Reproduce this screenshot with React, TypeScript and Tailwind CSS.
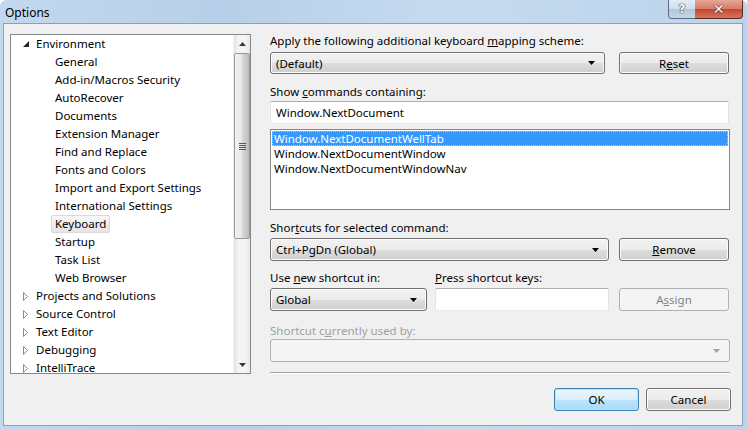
import React from "react";

const face =
  "rounded-[3px] border border-[#707070] bg-[linear-gradient(#f2f2f2_0%,#ebebeb_50%,#dddddd_50%,#cfcfcf_100%)] shadow-[inset_0_0_0_1px_#fcfcfc] text-black";
const btn = `flex items-center justify-center ${face}`;

function Arrow({ disabled }: { disabled?: boolean }) {
  return (
    <svg width="7" height="4" viewBox="0 0 7 4" className="shrink-0">
      <path d="M0 0H7L3.5 4Z" fill={disabled ? "#a0a0a0" : "#000"} />
    </svg>
  );
}

function Combo({ text, className }: { text: string; className: string }) {
  return (
    <div className={`flex items-center justify-between pl-[5px] pr-[9px] ${face} ${className}`}>
      <span>{text}</span>
      <Arrow />
    </div>
  );
}

function Expanded() {
  return (
    <svg width="6" height="6" viewBox="0 0 6 6">
      <path d="M6 0V6H0Z" fill="#262626" />
    </svg>
  );
}
function Collapsed() {
  return (
    <svg width="5" height="9" viewBox="0 0 5 9">
      <path d="M0.5 0.5L4.5 4.5L0.5 8.5Z" fill="#fff" stroke="#8c8c8c" strokeWidth="1" />
    </svg>
  );
}

const children = [
  "General",
  "Add-in/Macros Security",
  "AutoRecover",
  "Documents",
  "Extension Manager",
  "Find and Replace",
  "Fonts and Colors",
  "Import and Export Settings",
  "International Settings",
  "Keyboard",
  "Startup",
  "Task List",
  "Web Browser",
];
const roots = ["Projects and Solutions", "Source Control", "Text Editor", "Debugging", "IntelliTrace"];

const textbox =
  "border border-[#abadb3] border-l-[#e2e3ea] border-r-[#e2e3ea] border-b-[#e3e9ef] bg-white rounded-[2px]";

export default function App() {
  return (
    <div className="relative w-[747px] h-[430px] overflow-hidden flex flex-col rounded-t-[6px] bg-[linear-gradient(90deg,#c2d8ee_0%,#b7cfe8_30%,#c6dbf0_60%,#bcd3ea_100%)] font-['Segoe_UI','Noto_Sans',sans-serif] text-[11.5px] leading-[15px] text-black">
      {/* title bar */}
      <div className="h-[23px] shrink-0 flex items-center pl-[5px] pt-[1px]">
        <span className="text-[12px]">Options</span>
      </div>
      <div className="absolute top-0 left-[668px] h-[19px] w-[28px] rounded-bl-[4px] border border-t-0 border-[#5b6d84] bg-[linear-gradient(#e3ecf6_0%,#cfdcec_50%,#b4c6dc_50%,#c6d6e8_100%)] flex items-center justify-center">
        <span className="font-['DejaVu_Sans',sans-serif] font-bold text-[12px] leading-none text-white [text-shadow:0_0_1px_#333,0_0_1px_#333,0_0_1px_#333]">?</span>
      </div>
      <div className="absolute top-0 left-[695px] h-[19px] w-[48px] rounded-br-[4px] border border-t-0 border-l-0 border-[#5b2a20] bg-[linear-gradient(#e6a796_0%,#d67c64_50%,#c4452c_50%,#d3765e_100%)] flex items-center justify-center">
        <span className="font-['DejaVu_Sans',sans-serif] font-bold text-[14px] leading-none text-white [text-shadow:0_0_1px_#333,0_0_1px_#333,0_0_1px_#333]">✕</span>
      </div>

      {/* client */}
      <div className="mx-[3px] mr-[4px] mb-[4px] flex-1 bg-[#f0f0f0] border border-[#8aa0bd] flex pl-[6px] pt-[10px]">
        {/* tree */}
        <div className="w-[241px] h-[340px] border border-[#828790] bg-white flex shrink-0">
          <div className="flex-1 overflow-hidden">
            <div className="h-[18px] flex items-center pl-[12px] pb-[2px]">
              <span className="w-[13px] flex pt-[2px]"><Expanded /></span>
              <span>Environment</span>
            </div>
            {children.map((c) => (
              <div key={c} className="h-[18px] flex items-center pl-[44px]">
                {c === "Keyboard" ? (
                  <span className="h-[18px] flex items-center px-[3px] pb-[2px] rounded-[2px] border border-[#d9d9d9] bg-[linear-gradient(#f8f8f8,#e5e5e5)] -ml-[4px]">
                    {c}
                  </span>
                ) : (
                  <span className="pb-[2px]">{c}</span>
                )}
              </div>
            ))}
            {roots.map((r) => (
              <div key={r} className="h-[18px] flex items-center pl-[12px]">
                <span className="w-[13px] flex pt-[1px]"><Collapsed /></span>
                <span className="pb-[2px]">{r}</span>
              </div>
            ))}
          </div>
          {/* scrollbar */}
          <div className="w-[17px] bg-[linear-gradient(90deg,#e3e3e3,#f4f4f4_30%,#f4f4f4_70%,#e8e8e8)] flex flex-col items-center border-l border-[#f0f0f0]">
            <div className="h-[17px] w-full flex items-center justify-center">
              <svg width="7" height="4" viewBox="0 0 7 4"><path d="M3.5 0L7 4H0Z" fill="#3b3b3b" /></svg>
            </div>
            <div className="mt-[1px] h-[186px] w-[16px] rounded-[2px] border border-[#979797] bg-[linear-gradient(90deg,#f3f3f3_0%,#e8e8e8_45%,#d6d6d6_55%,#bcbcbc_100%)] flex items-center justify-center">
              <div className="flex flex-col gap-[1px]">
                <div className="w-[7px] h-[1px] bg-[#5a5a5a]" />
                <div className="w-[7px] h-[1px] bg-[#5a5a5a]" />
                <div className="w-[7px] h-[1px] bg-[#5a5a5a]" />
                <div className="w-[7px] h-[1px] bg-[#5a5a5a]" />
              </div>
            </div>
            <div className="flex-1" />
            <div className="h-[17px] w-full flex items-center justify-center">
              <svg width="7" height="4" viewBox="0 0 7 4"><path d="M0 0H7L3.5 4Z" fill="#3b3b3b" /></svg>
            </div>
          </div>
        </div>

        {/* right pane */}
        <div className="ml-[19px] w-[460px] flex flex-col">
          <div className="h-[15px] mt-[-1px]">
            Apply the following additional keyboard <u>m</u>apping scheme:
          </div>
          <div className="mt-[4px] flex gap-[14px]">
            <Combo text="(Default)" className="w-[335px] h-[22px]" />
            <div className={`${btn} w-[110px] h-[22px]`}>
              R<u>e</u>set
            </div>
          </div>
          <div className="mt-[10px] h-[15px]">
            Show <u>c</u>ommands containing:
          </div>
          <div className={`mt-[2px] w-[459px] h-[23px] flex items-center pl-[5px] ${textbox}`}>
            Window.NextDocument
          </div>
          <div className="mt-[5px] w-[460px] h-[81px] border border-[#828790] bg-white p-[1px]">
            <div className="h-[15px] bg-[#3399ff] text-white pl-[2px] outline outline-1 outline-dotted outline-[#f7c27c] -outline-offset-1 flex items-center">
              Window.NextDocumentWellTab
            </div>
            <div className="h-[15px] pl-[2px] flex items-center">Window.NextDocumentWindow</div>
            <div className="h-[15px] pl-[2px] flex items-center">Window.NextDocumentWindowNav</div>
          </div>
          <div className="mt-[10px] h-[15px]">
            Shor<u>t</u>cuts for selected command:
          </div>
          <div className="mt-[3px] flex gap-[10px]">
            <Combo text="Ctrl+PgDn (Global)" className="w-[339px] h-[23px]" />
            <div className={`${btn} w-[110px] h-[23px]`}>
              <u>R</u>emove
            </div>
          </div>
          <div className="mt-[9px] h-[15px] flex">
            <span className="w-[165px]">
              Use <u>n</u>ew shortcut in:
            </span>
            <span>
              <u>P</u>ress shortcut keys:
            </span>
          </div>
          <div className="mt-[3px] flex">
            <Combo text="Global" className="w-[157px] h-[23px]" />
            <div className={`ml-[8px] w-[174px] h-[23px] ${textbox}`} />
            <div className="ml-[10px] w-[110px] h-[23px] rounded-[3px] border border-[#adb2b5] bg-[#f4f4f4] text-[#838383] flex items-center justify-center">
              A<u>s</u>sign
            </div>
          </div>
          <div className="mt-[12px] h-[15px] text-[#a0a0a0]">
            Shortcut c<u>u</u>rrently used by:
          </div>
          <div className="mt-[1px] w-[460px] h-[23px] rounded-[3px] border border-[#adb2b5] bg-[#f4f4f4] flex items-center justify-end pr-[9px]">
            <Arrow disabled />
          </div>
          <div className="mt-[10px] w-[460px] h-[1px] bg-[#a0a0a0] border-b border-white box-content" />
          <div className="mt-[14px] flex justify-end gap-[7px] -mr-[1px]">
            <div className="w-[85px] h-[23px] rounded-[3px] border border-[#3c7fb1] bg-[linear-gradient(#eaf6fd_0%,#d9f0fc_50%,#bee6fd_50%,#a7d9f5_100%)] shadow-[inset_0_0_0_1px_#bfe1f5] flex items-center justify-center">
              OK
            </div>
            <div className={`${btn} w-[85px] h-[23px]`}>Cancel</div>
          </div>
        </div>
      </div>
    </div>
  );
}
